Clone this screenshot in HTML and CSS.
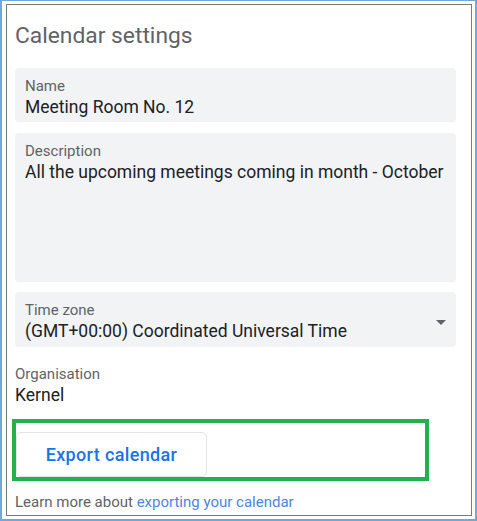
FILE: index.html
```html
<!DOCTYPE html>
<html lang="en">
<head>
  <meta charset="UTF-8">
  <meta name="viewport" content="width=device-width, initial-scale=1.0">
  <title>Calendar settings</title>
  <link rel="stylesheet" href="styles.css">
</head>
<body>
  <div class="frame">
    <div class="panel">
      <h1 class="title">Calendar settings</h1>

      <div class="fields">
        <div class="field">
          <div class="label">Name</div>
          <div class="value">Meeting Room No. 12</div>
        </div>

        <div class="field description">
          <div class="label">Description</div>
          <div class="value">All the upcoming meetings coming in month - October</div>
        </div>

        <div class="field select">
          <div class="select-text">
            <div class="label">Time zone</div>
            <div class="value">(GMT+00:00) Coordinated Universal Time</div>
          </div>
          <svg class="arrow" width="10" height="5" viewBox="0 0 10 5">
            <path d="M0 0h10L5 5z" fill="#5f6368"/>
          </svg>
        </div>
      </div>

      <div class="org">
        <div class="label">Organisation</div>
        <div class="value">Kernel</div>
      </div>

      <div class="highlight">
        <button class="export-btn">Export calendar</button>
      </div>

      <p class="learn-more">Learn more about <a href="#">exporting your calendar</a></p>
    </div>
  </div>
</body>
</html>
```

FILE: styles.css
```css
body {
  margin: 0;
  font-family: Roboto, "Liberation Sans", sans-serif;
  background: #fff;
}

.frame {
  height: 521px;
  box-sizing: border-box;
  border-style: solid;
  border-color: #6fa8dc;
  border-width: 1px 2px 2px 2px;
  padding: 3px 3px 3px 4px;
}

.panel {
  height: 100%;
  box-sizing: border-box;
  border: 1px solid #7a7a7a;
  padding: 17px 15px 0 8px;
}

.title {
  margin: 0 0 18px;
  font-size: 22.8px;
  line-height: 28px;
  font-weight: 400;
  color: #5f6368;
}

.fields {
  display: flex;
  flex-direction: column;
  gap: 11px;
}

.field {
  background-color: #f1f3f4;
  border-radius: 4px;
  padding: 10px 10px 4px;
}

.description {
  height: 149px;
  box-sizing: border-box;
}

.select {
  display: flex;
  align-items: center;
  margin-top: -1px;
  padding-bottom: 5px;
}

.select-text {
  flex: 1;
}

.label {
  font-size: 15px;
  line-height: 16px;
  color: #5f6368;
}

.value {
  margin-top: 2px;
  font-size: 17.5px;
  line-height: 22px;
  color: #202124;
}

.org {
  margin-top: 19px;
}

.highlight {
  margin: 13px 0 0 -3px;
  width: 417px;
  box-sizing: border-box;
  border: 4px solid #22b14c;
  padding-top: 9px;
}

.export-btn {
  display: block;
  width: 191px;
  height: 45px;
  background: #fff;
  border: 1px solid #e3e4e6;
  border-radius: 5px;
  font-family: Roboto, "Liberation Sans", sans-serif;
  font-size: 18px;
  font-weight: 500;
  letter-spacing: 0.35px;
  color: #1a73e8;
  cursor: pointer;
}

.learn-more {
  margin: 13px 0 0;
  font-size: 15px;
  line-height: 16px;
  color: #5f6368;
}

.learn-more a {
  color: #4a86e8;
  text-decoration: none;
}
```
